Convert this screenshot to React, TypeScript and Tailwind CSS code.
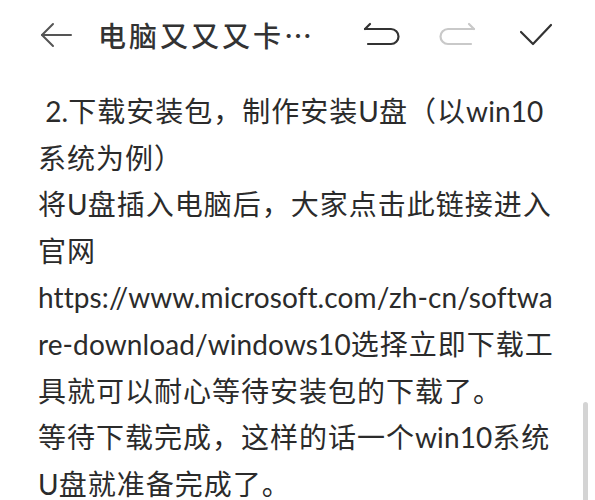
import React from "react";

const lines = [
  " 2.下载安装包，制作安装U盘（以win10",
  "系统为例）",
  "将U盘插入电脑后，大家点击此链接进入",
  "官网",
  "https://www.microsoft.com/zh-cn/softwa",
  "re-download/windows10选择立即下载工",
  "具就可以耐心等待安装包的下载了。",
  "等待下载完成，这样的话一个win10系统",
  "U盘就准备完成了。",
];

// split a line into latin / cjk runs so the latin parts get their own font
const renderLine = (line: string) =>
  line.split(/([\x20-\x7E]+)/).filter(Boolean).map((part, i) =>
    /^[\x20-\x7E]+$/.test(part) ? (
      <span key={i} className="tracking-[0.1px]" style={{ fontFamily: 'Lato, "Noto Sans", sans-serif' }}>
        {part}
      </span>
    ) : (
      <span key={i} className="tracking-[1px]">
        {part}
      </span>
    )
  );

const BackIcon = () => (
  <svg width="40" height="30" viewBox="0 0 40 30" fill="none" stroke="#555" strokeWidth="2" strokeLinecap="round" strokeLinejoin="round">
    <path d="M5 15 H34" />
    <path d="M16 4 L5 15 L16 26" />
  </svg>
);

const UndoIcon = ({ color }: { color: string }) => (
  <svg width="40" height="30" viewBox="0 0 40 30" fill="none" stroke={color} strokeWidth="2.2" strokeLinecap="round" strokeLinejoin="round">
    <path d="M4 9 H30 A7.5 7.5 0 0 1 30 24 H7" />
    <path d="M4 9 L9 4" />
  </svg>
);

const RedoIcon = ({ color }: { color: string }) => (
  <svg width="40" height="30" viewBox="0 0 40 30" fill="none" stroke={color} strokeWidth="2.2" strokeLinecap="round" strokeLinejoin="round">
    <path d="M36 9 H10 A7.5 7.5 0 0 0 10 24 H33" />
    <path d="M36 9 L31 4" />
  </svg>
);

const CheckIcon = () => (
  <svg width="40" height="30" viewBox="0 0 40 30" fill="none" stroke="#333" strokeWidth="2.2" strokeLinecap="round" strokeLinejoin="round">
    <path d="M6 12 L18 24 L36 5" />
  </svg>
);

export default function App() {
  return (
    <div
      className="relative w-[595px] h-[500px] overflow-hidden bg-white text-[#2b2b2b]"
      style={{ fontFamily: '"Noto Sans CJK SC", "Noto Sans", sans-serif' }}
    >
      {/* Top bar */}
      <div className="flex items-center h-[70px] pl-[37px] pr-[40px]">
        <BackIcon />
        <div className="ml-[21px] text-[28px] font-medium tracking-[3px] text-[#333] whitespace-nowrap">
          电脑又又又卡<span className="tracking-[-2px]">…</span>
        </div>
        <div className="ml-auto flex items-center gap-[37px]">
          <UndoIcon color="#333" />
          <RedoIcon color="#c9c9c9" />
          <CheckIcon />
        </div>
      </div>

      {/* Body */}
      <div className="pl-[38px] pt-[23px] flex flex-col gap-[12.6px]">
        {lines.map((line, i) => (
          <div key={i} className="h-[34px] leading-[34px] text-[28px] whitespace-pre">
            {renderLine(line)}
          </div>
        ))}
      </div>

      {/* Scrollbar */}
      <div className="absolute right-[7px] top-[402px] w-[5px] h-[100px] rounded-full bg-[#d4d4d4]" />
    </div>
  );
}
